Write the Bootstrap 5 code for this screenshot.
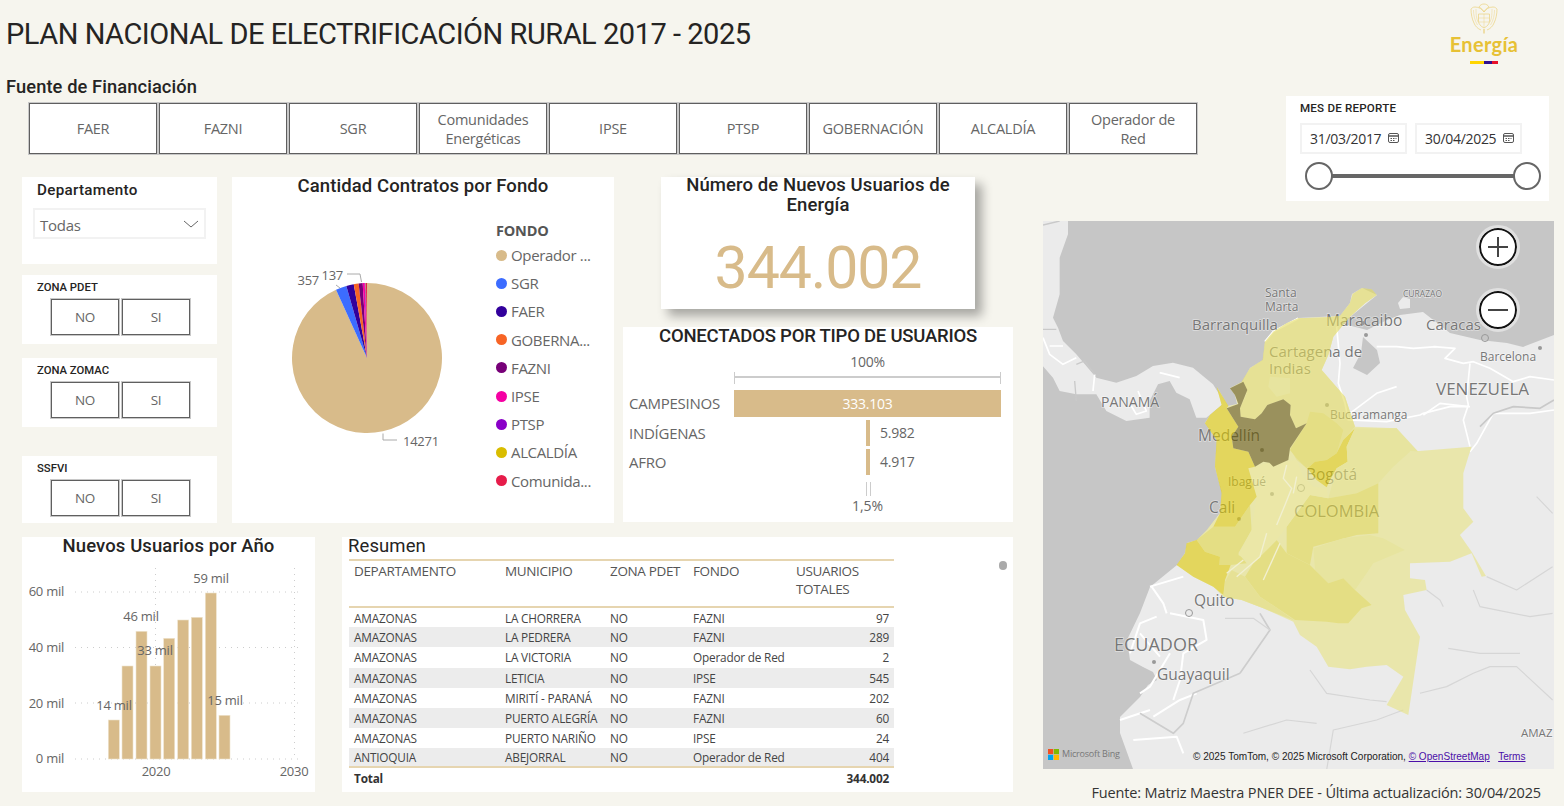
<!DOCTYPE html>
<html lang="es">

<head>
    <meta charset="UTF-8">
    <meta name="viewport" content="width=device-width, initial-scale=1.0">
    <title>Plan Nacional de Electrificación Rural</title>
    <link href="https://cdn.jsdelivr.net/npm/bootstrap@5.3.0/dist/css/bootstrap.min.css" rel="stylesheet">
    <script src="https://cdn.jsdelivr.net/npm/bootstrap@5.3.0/dist/js/bootstrap.bundle.min.js"></script>
    <style>
        body {
            background-color: #f6f5ee;
            width: 1564px;
            height: 806px;
            overflow: hidden;
            font-family: "Open Sans", sans-serif;
            color: #666;
        }

        .din {
            font-family: Roboto, sans-serif;
            color: #252423;
        }

        .panel {
            background-color: #fff;
            display: flow-root;
        }

        .top-bar {
            height: 70px;
        }

        .page-title {
            font-size: 29px;
            font-weight: 400;
            letter-spacing: -.47px;
            margin: 16px 0 0 6px;
            line-height: 36px;
        }

        .logo-box {
            width: 70px;
            margin: 3px 45px 0 0;
        }

        .logo-word {
            font-family: Lato, sans-serif;
            font-weight: 700;
            font-size: 20px;
            line-height: 22px;
            color: #e7c135;
            text-align: center;
            margin-top: -1px;
            letter-spacing: .3px;
        }

        .logo-flag {
            width: 28px;
            height: 3px;
            margin: 6px auto 0;
            background: linear-gradient(90deg, #ffd500 50%, #30108e 50%, #30108e 78%, #e8102a 78%);
        }

        .left-side {
            width: 1043px;
        }

        .source-title {
            font-size: 18.3px;
            font-weight: 500;
            line-height: 22px;
            margin: 6px 0 5px 6px;
            letter-spacing: .1px;
        }

        .fund-row {
            margin-left: 29px;
            margin-bottom: 23px;
            gap: 2px;
        }

        .fund-btn,
        .yn-btn {
            background-color: #fff;
            border: 1px solid #5f5f5f;
            outline: 1px solid #c8c8c8;
            outline-offset: 0;
            border-radius: 0;
            color: #666;
            padding: 0 6px;
            font-size: 14.5px;
            line-height: 19px;
            letter-spacing: -.25px;
        }

        .fund-btn {
            flex: 0 0 128px;
            height: 51px;
        }

        .yn-btn {
            width: 68px;
            height: 36px;
            font-size: 13.5px;
        }

        .col-filters {
            width: 195px;
            margin-left: 22px;
        }

        .dep-card {
            height: 87px;
            padding: 5px 11px 0;
            margin-bottom: 11px;
        }

        .dep-title {
            font-size: 15.2px;
            font-weight: 500;
            letter-spacing: .3px;
            line-height: 16px;
            margin: 0 0 10px 4px;
        }

        .dep-select {
            height: 31px;
            border: 2px solid #f2f2f2;
            padding: 0 5px 0 5px;
            font-size: 15px;
            letter-spacing: -.25px;
        }

        .dep-select span {
            margin-top: 3px;
        }

        .zone-card {
            padding: 6px 0 0 15px;
        }

        .zone-label {
            font-size: 11.300px;
            font-weight: 500;
            line-height: 14px;
            margin-bottom: 4px;
        }

        .zone-btns {
            margin-left: 14px;
            gap: 3px;
        }

        .h-69 {
            height: 69px;
        }

        .h-67 {
            height: 67px;
        }

        .mb-14 {
            margin-bottom: 14px;
        }

        .mb-29 {
            margin-bottom: 29px;
        }

        .pie-card {
            width: 382px;
            height: 346px;
            margin: 0 9px 0 15px;
            position: relative;
        }

        .card-heading {
            font-size: 18.5px;
            font-weight: 500;
            line-height: 20px;
            text-align: center;
            letter-spacing: .1px;
            margin: -1px 0 1px;
        }

        .kpi-head {
            margin-top: -2px;
        }

        .users-head {
            letter-spacing: -.23px;
            margin-bottom: 7px;
        }

        .pie-svg {
            position: absolute;
            left: 0;
            top: 0;
        }

        .pie-svg text,
        .chart-svg text {
            font-family: "Open Sans", sans-serif;
            font-size: 13px;
            letter-spacing: -.25px;
            fill: #666;
        }

        .legend-box {
            position: absolute;
            left: 264px;
            top: 44px;
        }

        .legend-title {
            font-weight: 700;
            font-size: 14.5px;
            line-height: 20px;
            color: #555;
            letter-spacing: -.2px;
        }

        .legend-item {
            height: 28.2px;
            font-size: 15px;
            letter-spacing: -.35px;
            line-height: 28px;
            white-space: nowrap;
        }

        .legend-dot {
            width: 11px;
            height: 11px;
            border-radius: 50%;
            margin-right: 4px;
        }

        .col-right {
            width: 390px;
        }

        .kpi-card {
            width: 314px;
            height: 132px;
            margin: 0 0 18px 38px;
            box-shadow: 7px 7px 10px rgba(0, 0, 0, .32);
        }

        .kpi-value {
            font-size: 59px;
            line-height: 60px;
            font-weight: 400;
            color: #d8bb8a;
            text-align: center;
            margin-top: 23px;
            letter-spacing: -1.1px;
        }

        .users-card {
            height: 195px;
        }

        .users-grid {
            display: grid;
            grid-template-columns: 111px 267px;
            font-size: 15px;
            letter-spacing: -.25px;
        }

        .users-label {
            padding-left: 6px;
            line-height: 26px;
            height: 29px;
        }

        .axis-label {
            text-align: center;
            font-size: 14px;
            line-height: 18px;
        }

        .axis-top {
            height: 12px;
            border: 2px solid #ccc;
            border-width: 0 1px;
            position: relative;
            margin: 1px 0 6px;
        }

        .axis-top::after {
            content: "";
            position: absolute;
            left: 0;
            right: 0;
            top: 4px;
            border-top: 2px solid #ccc;
        }

        .bar-main {
            height: 27px;
            background-color: #d8bb8a;
            color: #fff;
            text-align: center;
            line-height: 27px;
            font-size: 14px;
            margin-bottom: 3px;
        }

        .bar-cell {
            height: 29px;
            padding-left: 132px;
            font-size: 14px;
            line-height: 26px;
        }

        .bar-thin {
            width: 4px;
            height: 26px;
            background-color: #d8bb8a;
            margin-right: 10px;
        }

        .axis-small {
            width: 5px;
            height: 14px;
            border: 1px solid #ccc;
            border-width: 0 1px;
            margin: 4px 0 1px 132px;
        }

        .axis-foot {
            width: 267px;
            margin-left: 111px;
        }

        .row-two {
            margin: 14px 0 0 22px;
        }

        .year-card {
            width: 293px;
            height: 255px;
            margin-right: 27px;
        }

        .table-card {
            width: 671px;
            height: 255px;
            position: relative;
        }

        .table-card .card-heading {
            text-align: left;
            padding-left: 6px;
            font-weight: 400;
        }

        .table-box {
            margin: 3px 0 0 7px;
            width: 545px;
        }

        .res-table {
            table-layout: fixed;
            margin: 0;
            font-size: 11.8px;
            color: #444;
            letter-spacing: -.2px;
            border-top: 2px solid #e6d5b0;
        }

        .res-table th,
        .res-table td {
            border: 0;
            padding: 0 5px;
            box-shadow: none;
            background: transparent;
            color: #444;
            vertical-align: middle;
            white-space: nowrap;
        }

        .res-table thead th {
            font-weight: 400;
            font-size: 13.5px;
            line-height: 18px;
            letter-spacing: -.35px;
            height: 47px;
            padding-top: 1px;
            vertical-align: top;
            white-space: normal;
            border-bottom: 2px solid #e6d5b0;
            color: #555;
        }

        .res-table tbody td {
            height: 20.2px;
            line-height: 14px;
        }

        .res-table tbody tr:last-child td {
            height: 19px;
        }

        .res-table tbody tr:nth-child(even) td {
            background-color: #ececec;
        }

        .res-table tfoot td {
            border-top: 2px solid #e6d5b0;
            height: 22px;
            font-weight: 700;
            color: #333;
        }

        .scroll-dot {
            position: absolute;
            right: 6px;
            top: 24px;
            width: 8px;
            height: 9px;
            border-radius: 4px;
            background-color: #aaa;
        }

        .right-side {
            width: 521px;
            padding-top: 26px;
        }

        .date-card {
            width: 263px;
            height: 105px;
            margin: 0 0 20px 243px;
            padding: 5px 0 0 14px;
        }

        .date-label {
            font-size: 11.6px;
            font-weight: 500;
            letter-spacing: .2px;
            line-height: 14px;
            margin-bottom: 8px;
        }

        .date-box {
            width: 107px;
            height: 31px;
            border: 2px solid #f2f2f2;
            padding: 0 6px 0 8px;
            color: #333;
            font-size: 14px;
            letter-spacing: -.3px;
        }

        .range-line {
            position: relative;
            height: 28px;
            margin: 8px 0 0 5px;
            width: 236px;
        }

        .range-line::before {
            content: "";
            position: absolute;
            left: 10px;
            right: 10px;
            top: 12px;
            height: 4px;
            background-color: #666;
        }

        .range-knob {
            position: absolute;
            top: 0;
            width: 28px;
            height: 28px;
            border: 2px solid #666;
            border-radius: 50%;
            background-color: #fff;
        }

        .map-box {
            width: 511px;
            height: 548px;
            position: relative;
            overflow: hidden;
        }

        .map-svg {
            display: block;
        }

        .map-svg text {
            font-family: "Open Sans", sans-serif;
            fill: #777;
            paint-order: stroke;
            stroke: rgba(255, 255, 255, .45);
            stroke-width: 1.5px;
        }

        .zoom-btn {
            position: absolute;
            left: 434px;
            padding: 0;
            background-color: #fff;
            border: 2px solid #111;
            border-radius: 50%;
            outline: 3px solid #e0e0e0;
            display: flex;
            align-items: center;
            justify-content: center;
            width: 38px;
            height: 38px;
            margin: 2px;
        }

        .zoom-plus {
            top: 5px;
        }

        .zoom-minus {
            top: 68px;
        }

        .map-credit {
            position: absolute;
            left: 150px;
            top: 530px;
            font-family: "Liberation Sans", sans-serif;
            font-size: 10.050px;
            line-height: 12px;
            color: #222;
            white-space: nowrap;
        }

        .map-credit a {
            color: #4b0fa8;
        }

        .bing-mark {
            position: absolute;
            left: 5px;
            top: 527px;
            gap: 3px;
            font-size: 9px;
            line-height: 12px;
            color: #777;
            letter-spacing: -.2px;
        }

        .foot-note {
            width: 498px;
            text-align: right;
            margin-top: 14px;
            font-size: 14.5px;
            line-height: 20px;
            color: #333;
            letter-spacing: -.15px;
        }
    </style>
</head>

<body>
    <div class="top-bar d-flex justify-content-between">
        <h1 class="page-title din">PLAN NACIONAL DE ELECTRIFICACIÓN RURAL 2017 - 2025</h1>
        <div class="logo-box">
            <svg class="d-block mx-auto" width="28" height="31" viewBox="0 0 28 31" fill="none" stroke="#ecd58a" stroke-width=".8">
                <path d="M8.500 11h11v7c0 3-2 5-5.500 7-3.500-2-5.500-4-5.500-7z" />
                <path d="M8.500 15h11M8.500 19h11M14 11v14" stroke-width=".5" />
                <path d="M14 9C12 6 9 4 5 4 3 4 2 5 1 6c0 5 1 10 3 14 1 3 4 6 7 7" />
                <path d="M14 9c2-3 5-5 9-5 2 0 3 1 4 2 0 5-1 10-3 14-1 3-4 6-7 7" />
                <path d="M9 4c1-2 3-3 5-3s4 1 5 3c-2 1-4 3-5 5-1-2-3-4-5-5z" />
                <path d="M3.500 7c0 5 1 10 4 15M6 6c0 4 0 9 2 13M24.500 7c0 5-1 10-4 15M22 6c0 4 0 9-2 13" stroke-width=".5" />
                <path d="M14 26v4.500" stroke-width="1.400" />
            </svg>
            <div class="logo-word">Energía</div>
            <div class="logo-flag"></div>
        </div>
    </div>

    <div class="d-flex">
        <div class="left-side">
            <div class="source-title din">Fuente de Financiación</div>
            <div class="fund-row d-flex">
                <button type="button" class="btn fund-btn">FAER</button>
                <button type="button" class="btn fund-btn">FAZNI</button>
                <button type="button" class="btn fund-btn">SGR</button>
                <button type="button" class="btn fund-btn">Comunidades Energéticas</button>
                <button type="button" class="btn fund-btn">IPSE</button>
                <button type="button" class="btn fund-btn">PTSP</button>
                <button type="button" class="btn fund-btn">GOBERNACIÓN</button>
                <button type="button" class="btn fund-btn">ALCALDÍA</button>
                <button type="button" class="btn fund-btn">Operador de<br>Red</button>
            </div>

            <div class="d-flex">
                <div class="col-filters">
                    <div class="panel dep-card">
                        <div class="dep-title din">Departamento</div>
                        <div class="dep-select d-flex align-items-center justify-content-between">
                            <span>Todas</span>
                            <svg width="16" height="8" viewBox="0 0 16 8" fill="none" stroke="#666" stroke-width="1">
                                <path d="M1 1l7 6 7-6" />
                            </svg>
                        </div>
                    </div>
                    <div class="panel zone-card h-69 mb-14">
                        <div class="zone-label din">ZONA PDET</div>
                        <div class="zone-btns d-flex">
                            <button type="button" class="btn yn-btn">NO</button>
                            <button type="button" class="btn yn-btn">SI</button>
                        </div>
                    </div>
                    <div class="panel zone-card h-69 mb-29">
                        <div class="zone-label din">ZONA ZOMAC</div>
                        <div class="zone-btns d-flex">
                            <button type="button" class="btn yn-btn">NO</button>
                            <button type="button" class="btn yn-btn">SI</button>
                        </div>
                    </div>
                    <div class="panel zone-card h-67">
                        <div class="zone-label din">SSFVI</div>
                        <div class="zone-btns d-flex">
                            <button type="button" class="btn yn-btn">NO</button>
                            <button type="button" class="btn yn-btn">SI</button>
                        </div>
                    </div>
                </div>

                <div class="panel pie-card">
                    <div class="card-heading din">Cantidad Contratos por Fondo</div>
                    <svg class="pie-svg" id="pieChart" width="264" height="346" viewBox="232 177 264 346">
                        <path d="M383 433.500v6.500h14M336 285l4 3M347 274h13l1.500 8" fill="none" stroke="#aaa" stroke-width="1" />
                        <text x="403" y="445.500">14271</text>
                        <text x="297.500" y="285">357</text>
                        <text x="321.500" y="280">137</text>
                    </svg>
                    <div class="legend-box">
                        <div class="legend-title">FONDO</div>
                        <div class="legend-item d-flex align-items-center"><span class="legend-dot" style="background:#d8bb8a"></span>Operador ...</div>
                        <div class="legend-item d-flex align-items-center"><span class="legend-dot" style="background:#3c6cff"></span>SGR</div>
                        <div class="legend-item d-flex align-items-center"><span class="legend-dot" style="background:#32009c"></span>FAER</div>
                        <div class="legend-item d-flex align-items-center"><span class="legend-dot" style="background:#f76425"></span>GOBERNA...</div>
                        <div class="legend-item d-flex align-items-center"><span class="legend-dot" style="background:#770078"></span>FAZNI</div>
                        <div class="legend-item d-flex align-items-center"><span class="legend-dot" style="background:#f500a3"></span>IPSE</div>
                        <div class="legend-item d-flex align-items-center"><span class="legend-dot" style="background:#8a00c8"></span>PTSP</div>
                        <div class="legend-item d-flex align-items-center"><span class="legend-dot" style="background:#d9bd00"></span>ALCALDÍA</div>
                        <div class="legend-item d-flex align-items-center"><span class="legend-dot" style="background:#e61c4a"></span>Comunida...</div>
                    </div>
                </div>

                <div class="col-right">
                    <div class="panel kpi-card">
                        <div class="card-heading kpi-head din">Número de Nuevos Usuarios de Energía</div>
                        <div class="kpi-value din">344.002</div>
                    </div>
                    <div class="panel users-card">
                        <div class="card-heading users-head din">CONECTADOS POR TIPO DE USUARIOS</div>
                        <div class="users-grid">
                            <div></div>
                            <div>
                                <div class="axis-label">100%</div>
                                <div class="axis-top"></div>
                            </div>
                            <div class="users-label">CAMPESINOS</div>
                            <div class="bar-main">333.103</div>
                            <div class="users-label">INDÍGENAS</div>
                            <div class="bar-cell d-flex"><span class="bar-thin"></span>5.982</div>
                            <div class="users-label">AFRO</div>
                            <div class="bar-cell d-flex"><span class="bar-thin"></span>4.917</div>
                        </div>
                        <div class="axis-foot">
                            <div class="axis-small"></div>
                            <div class="axis-label">1,5%</div>
                        </div>
                    </div>
                </div>
            </div>

            <div class="row-two d-flex">
                <div class="panel year-card">
                    <div class="card-heading din">Nuevos Usuarios por Año</div>
                    <svg class="chart-svg d-block" width="293" height="235" viewBox="22 557 293 235">
                        <g stroke="#ccc" stroke-width="1" stroke-dasharray="1 5">
                            <path d="M75 592h225M75 647.500h225M75 703h225M75 759h225M155.500 568v191M294.500 568v191" />
                        </g>
                        <g fill="#d8bb8a" stroke="#efe3cd" stroke-width=".6">
                            <rect x="108.300" y="720" width="11" height="39" />
                            <rect x="122" y="666" width="11" height="93" />
                            <rect x="136" y="631.300" width="11" height="127.700" />
                            <rect x="150" y="666" width="11" height="93" />
                            <rect x="163.700" y="638.300" width="11" height="120.700" />
                            <rect x="177.700" y="620" width="11" height="139" />
                            <rect x="191.300" y="617.300" width="11" height="141.700" />
                            <rect x="205.300" y="593" width="11" height="166" />
                            <rect x="219" y="715.300" width="11" height="43.700" />
                        </g>
                        <g text-anchor="end">
                            <text x="64" y="596">60 mil</text>
                            <text x="64" y="652">40 mil</text>
                            <text x="64" y="708">20 mil</text>
                            <text x="64" y="763">0 mil</text>
                        </g>
                        <g text-anchor="middle">
                            <text x="156" y="776">2020</text>
                            <text x="294" y="776">2030</text>
                            <text x="114" y="710">14 mil</text>
                            <text x="141" y="621">46 mil</text>
                            <text x="155" y="655">33 mil</text>
                            <text x="211" y="583">59 mil</text>
                            <text x="225" y="705">15 mil</text>
                        </g>
                    </svg>
                </div>

                <div class="panel table-card">
                    <div class="card-heading din">Resumen</div>
                    <div class="table-box">
                        <table class="table res-table">
                            <colgroup>
                                <col width="151">
                                <col width="105">
                                <col width="83">
                                <col width="103">
                                <col width="103">
                            </colgroup>
                            <thead>
                                <tr>
                                    <th>DEPARTAMENTO</th>
                                    <th>MUNICIPIO</th>
                                    <th>ZONA PDET</th>
                                    <th>FONDO</th>
                                    <th>USUARIOS TOTALES</th>
                                </tr>
                            </thead>
                            <tbody>
                                <tr><td>AMAZONAS</td><td>LA CHORRERA</td><td>NO</td><td>FAZNI</td><td class="text-end">97</td></tr>
                                <tr><td>AMAZONAS</td><td>LA PEDRERA</td><td>NO</td><td>FAZNI</td><td class="text-end">289</td></tr>
                                <tr><td>AMAZONAS</td><td>LA VICTORIA</td><td>NO</td><td>Operador de Red</td><td class="text-end">2</td></tr>
                                <tr><td>AMAZONAS</td><td>LETICIA</td><td>NO</td><td>IPSE</td><td class="text-end">545</td></tr>
                                <tr><td>AMAZONAS</td><td>MIRITÍ - PARANÁ</td><td>NO</td><td>FAZNI</td><td class="text-end">202</td></tr>
                                <tr><td>AMAZONAS</td><td>PUERTO ALEGRÍA</td><td>NO</td><td>FAZNI</td><td class="text-end">60</td></tr>
                                <tr><td>AMAZONAS</td><td>PUERTO NARIÑO</td><td>NO</td><td>IPSE</td><td class="text-end">24</td></tr>
                                <tr><td>ANTIOQUIA</td><td>ABEJORRAL</td><td>NO</td><td>Operador de Red</td><td class="text-end">404</td></tr>
                            </tbody>
                            <tfoot>
                                <tr><td colspan="4">Total</td><td class="text-end">344.002</td></tr>
                            </tfoot>
                        </table>
                    </div>
                    <div class="scroll-dot"></div>
                </div>
            </div>
        </div>

        <div class="right-side">
            <div class="panel date-card">
                <div class="date-label din">MES DE REPORTE</div>
                <div class="d-flex gap-2">
                    <div class="date-box d-flex align-items-center justify-content-between">
                        <span>31/03/2017</span>
                        <svg width="11" height="11" viewBox="0 0 11 11" fill="none" stroke="#555" stroke-width="1"><rect x=".5" y=".5" width="10" height="9" rx="1.500" /><path d="M1 3h9" stroke-width="1.500" /><path d="M2.500 5.500h1.500M5 5.500h1.500M7.500 5.500h1M2.500 7.500h1.500M5 7.500h1.500" /></svg>
                    </div>
                    <div class="date-box d-flex align-items-center justify-content-between">
                        <span>30/04/2025</span>
                        <svg width="11" height="11" viewBox="0 0 11 11" fill="none" stroke="#555" stroke-width="1"><rect x=".5" y=".5" width="10" height="9" rx="1.500" /><path d="M1 3h9" stroke-width="1.500" /><path d="M2.500 5.500h1.500M5 5.500h1.500M7.500 5.500h1M2.500 7.500h1.500M5 7.500h1.500" /></svg>
                    </div>
                </div>
                <div class="range-line">
                    <span class="range-knob start-0"></span>
                    <span class="range-knob end-0"></span>
                </div>
            </div>

            <div class="map-box">
                <svg class="map-svg" width="511" height="548" viewBox="1043 221 511 548">
                    <rect x="1043" y="221" width="511" height="548" fill="#c6c6c6" />

                    <!-- land -->
                    <polygon fill="#ebebeb" points="1554,335 1523,347 1507,343 1480,340 1450,333 1423,312 1400,315 1387,320 1367,330 1340,323 1350,317 1377,295 1362,288 1352,294 1350,303 1340,316 1298,318 1287,323 1273,332 1265,342 1263,360 1250,368 1242,382 1230,388 1235,395 1237,404 1228,406 1217,387 1222,405 1210,415 1205,423 1217,440 1215,467 1222,493 1220,513 1207,530 1197,540 1187,543 1185,553 1177,565 1150,587 1140,613 1127,640 1130,660 1143,667 1153,672 1157,680 1148,685 1140,697 1120,717 1120,733 1133,769 1554,769" />
                    <polygon fill="#ebebeb" points="1398,303 1403,297 1410,299 1410,308 1400,309" />
                    <polygon fill="#c6c6c6" points="1363,337 1377,350 1380,363 1367,375 1353,368 1361,353" />
                    <polygon fill="#ebebeb" transform="translate(1043 221) scale(.3333)" points="-5,-5 75,-5 75,40 50,110 50,220 30,290 45,320 60,360 100,400 160,470 220,485 280,465 330,435 390,425 450,440 510,490 545,545 490,590 460,590 440,535 400,515 380,480 345,490 320,540 320,590 250,600 190,570 160,520 100,520 50,510 30,470 -5,430" />

                    <!-- roads and borders, panama side -->
                    <g transform="translate(1043 221) scale(.3333)" fill="none" stroke-linejoin="round">
                        <path stroke="#fff" stroke-width="5" d="M0 350l20 50 40 30 40-20M20 375h40M155 460l-5 50M285 510l25 60-30 10-15-25M350 455l60 15" />
                        <path stroke="#c9c9c9" stroke-width="4" d="M100 430l25-10 30 40M95 480l5 60M0 12l50-12M0 325h40" />
                    </g>
                    <!-- roads, venezuela side -->
                    <g transform="translate(1180 280) scale(.3333)" fill="none" stroke="#fff" stroke-width="5" stroke-linejoin="round">
                        <path d="M470 140l10 110-5 60 20 60 10 50 115 5 100-20 10-5 80-20 60 0M590 200h60l50 5 70-5M510 400l80-60 60-20" />
                        <path d="M355 115l-75 40-25 30" stroke-width="6" />
                    </g>
                    <g transform="translate(1380 280) scale(.3333)" fill="none" stroke-linejoin="round">
                        <path stroke="#fff" stroke-width="5" d="M160 200l65 5-30 30 55 15 30-5 50 20 70 40 50-15 72 10M270 250l-10 100 5 25-15 45 20 80M130 405l50-35 85 10M340 400h110l72-10M340 400l-50 90-20 25" />
                        <path stroke="#c9c9c9" stroke-width="5" d="M300 440l40-40 60-20 80 5 42-25" />
                    </g>
                    <!-- roads, ecuador and the south -->
                    <g transform="translate(1040 400) scale(.3333)" fill="none" stroke-linejoin="round">
                        <path stroke="#fff" stroke-width="6" d="M335 560l35 50 10 30M390 640l100 20 10 60-70 40-10 80-20 60M350 650l-50 20-30 90M340 950l80-50 50-20M240 960l90-30M280 1020l130-10 20 50M330 560l100-30M390 760l-60 100-30 20M300 700l60 70" />
                        <path stroke="#cdcdcd" stroke-width="5" d="M300 940l100 60 30-30 30-90 140-60M660 640l30 50-90 130" />
                        <path stroke="#d6d6d6" stroke-width="3.500" d="M555 655h85l50 35M860 1110l20-120 130-30 80-30M610 1000l130-40 90 10M810 810l50 70 130 20 50 5M1140 880l80-20 80-40 50-20h80l108 100M1225 745l95 15h120M1300 570l20 50 150 30 68-10M1340 530l90 40 108-70M1490 290l48 50M1160 570l40 30 10 20" />
                    </g>

                    <!-- map labels -->
                    <text font-size="12"><tspan x="1265" y="297">Santa</tspan><tspan x="1265" y="311">Marta</tspan></text>
                    <text x="1192" y="330" font-size="15">Barranquilla</text>
                    <text x="1326" y="326" font-size="15.500">Maracaibo</text>
                    <text x="1403" y="297" font-size="8.500">CURAZAO</text>
                    <text x="1426" y="330" font-size="15">Caracas</text>
                    <text x="1480" y="361" font-size="12">Barcelona</text>
                    <text x="1436" y="395" font-size="17">VENEZUELA</text>
                    <text x="1101" y="407" font-size="14">PANAMÁ</text>
                    <text font-size="15"><tspan x="1269" y="357">Cartagena de</tspan><tspan x="1269" y="374">Indias</tspan></text>
                    <text x="1330" y="419" font-size="12">Bucaramanga</text>
                    <text x="1198" y="441" font-size="15.500">Medellín</text>
                    <text x="1228" y="486" font-size="12">Ibagué</text>
                    <text x="1306" y="480" font-size="15.500">Bogotá</text>
                    <text x="1209" y="513" font-size="15.500">Cali</text>
                    <text x="1294" y="517" font-size="16.500">COLOMBIA</text>
                    <text x="1194" y="606" font-size="15.500">Quito</text>
                    <text x="1114" y="651" font-size="18">ECUADOR</text>
                    <text x="1157" y="680" font-size="15.500">Guayaquil</text>
                    <text x="1521" y="737" font-size="11.500">AMAZ</text>
                    <g fill="#999">
                        <circle cx="1363" cy="323" r="2" />
                        <circle cx="1366" cy="335" r="2" />
                        <circle cx="1327" cy="405" r="2" />
                        <circle cx="1262" cy="450" r="2" />
                        <circle cx="1272" cy="494" r="2" />
                        <circle cx="1239" cy="519" r="2" />
                        <circle cx="1154" cy="662" r="2" />
                        <circle cx="1540" cy="348" r="2" />
                    </g>
                    <g fill="none" stroke="#999">
                        <circle cx="1485" cy="338" r="3.500" />
                        <circle cx="1301" cy="488" r="3.500" />
                        <circle cx="1189" cy="613" r="3.500" />
                    </g>

                    <!-- colombia, semi transparent so the labels show through -->
                    <g transform="translate(1180 280) scale(.3333)" opacity=".6">
                        <polygon fill="#e8e482" points="590,45 575,28 545,25 518,42 510,70 480,108 440,112 355,115 320,130 280,155 255,185 248,240 210,265 185,305 150,325 165,345 172,372 145,378 110,320 125,375 90,405 75,430 110,480 105,560 125,640 120,700 80,750 50,780 20,790 15,820 -10,855 40,890 100,920 130,950 185,960 250,985 340,1025 360,1065 410,1100 445,1160 510,1168 560,1160 620,1155 670,1190 620,1275 685,1305 720,1070 675,990 670,945 740,930 735,900 690,895 690,850 810,845 875,820 905,890 918,888 875,815 840,765 880,725 850,685 850,580 865,530 875,500 690,515 650,445 525,440 495,350 425,270 445,225 460,170 510,110 555,70" />
                        <polygon fill="#e4dc5d" points="590,45 575,28 545,25 518,42 510,70 480,108 440,112 355,115 320,130 280,155 255,185 248,240 210,265 185,305 200,340 180,385 182,410 225,418 245,400 262,375 310,358 332,375 330,405 348,445 380,430 330,505 350,540 380,565 405,545 470,520 490,480 525,440 495,350 425,270 445,225 460,170 510,110 555,70" />
                        <polygon fill="#e6e16e" points="270,290 330,295 330,340 290,350 265,320" />
                        <polygon fill="#e1d741" points="390,395 430,400 470,430 490,450 470,520 440,540 405,545 380,565 350,535 330,510 380,430" />
                        <polygon fill="#dec900" points="525,445 500,500 503,545 470,565 450,600 440,622 410,600 382,565 405,545 440,540 470,520 490,480" />
                        <polygon fill="#e6e16e" points="525,445 650,445 715,515 690,515 640,560 595,610 530,640 445,655 470,565 503,545 500,500" />
                        <polygon fill="#e1d741" points="595,610 595,760 530,765 400,800 390,855 320,820 320,740 390,645 445,655 530,640" />
                        <polygon fill="#e6e16e" points="400,805 490,775 570,765 610,775 675,810 580,850 560,880 525,930 490,895 445,910 405,870" />
                        <polygon fill="#e1d741" points="320,820 390,855 405,870 445,910 490,895 525,930 575,975 545,985 505,1030 475,1030 440,1025 345,1020 300,990 240,950 195,890 220,850 290,780" />
                        <polygon fill="#e4dc5d" points="130,950 135,905 155,870 195,890 240,950 300,990 345,1022 250,985 185,960" />
                        <polygon fill="#e1d741" points="50,780 100,740 165,740 210,675 215,750 175,820 200,850 152,855 118,855 120,830 75,815" />
                        <polygon fill="#ebe67b" points="205,565 260,550 350,540 370,590 400,620 440,625 445,655 390,645 320,740 290,780 220,850 175,825 215,750 230,650" />
                        <polygon fill="#dec900" points="-10,855 15,820 20,790 50,780 75,815 120,830 118,855 152,855 135,900 130,945 100,920 40,890" />
                        <polygon fill="#dec900" points="110,320 145,378 140,385 175,440 155,470 160,505 205,515 225,560 205,565 230,650 210,675 165,740 100,740 120,700 125,640 105,560 110,480 75,430 90,405 125,375" />
                        <polygon fill="#665700" points="190,305 202,330 180,385 182,410 225,418 245,400 262,375 310,358 332,375 330,405 348,445 380,430 330,505 325,540 280,560 268,548 250,545 225,560 205,515 160,505 155,470 175,440 140,385 175,372 165,345 150,325" />
                        <path fill="none" stroke="#f6f3c0" stroke-width="4" d="M320 555l-10 40 25 30-20 50-25 60M350 590l-10 50M250 900l50-110M170 890l70-60 20-70M140 880l50-40" />
                    </g>
                </svg>

                <button type="button" class="zoom-btn zoom-plus" aria-label="Acercar"><svg width="22" height="22" viewBox="0 0 22 22" stroke="#444" stroke-width="2"><path d="M11 1v20M1 11h20" /></svg></button>
                <button type="button" class="zoom-btn zoom-minus" aria-label="Alejar"><svg width="22" height="22" viewBox="0 0 22 22" stroke="#444" stroke-width="2"><path d="M1 11h20" /></svg></button>

                <div class="bing-mark d-flex align-items-center">
                    <svg width="11" height="11" viewBox="0 0 11 11"><rect width="5.200" height="5.200" fill="#f25022" /><rect x="5.800" width="5.200" height="5.200" fill="#7fba00" /><rect y="5.800" width="5.200" height="5.200" fill="#00a4ef" /><rect x="5.800" y="5.800" width="5.200" height="5.200" fill="#ffb900" /></svg>
                    <span>Microsoft Bing</span>
                </div>
                <div class="map-credit">© 2025 TomTom, © 2025 Microsoft Corporation, <a href="#">© OpenStreetMap</a> &nbsp;&nbsp;<a href="#">Terms</a></div>
            </div>

            <div class="foot-note">Fuente: Matriz Maestra PNER DEE - Última actualización: 30/04/2025</div>
        </div>
    </div>

    <script>
        // pie slices as [start, end] degrees clockwise from the top
        const slices = [
            [0, 335.6, "#d8bb8a"],
            [335.6, 344, "#3c6cff"],
            [344, 349.8, "#32009c"],
            [349.8, 353.6, "#f76425"],
            [353.6, 356.7, "#770078"],
            [356.7, 358.3, "#f500a3"],
            [358.3, 358.9, "#8a00c8"],
            [358.9, 359.2, "#d9bd00"],
            [359.2, 360, "#e61c4a"]
        ];
        const cx = 367, cy = 358, r = 75;
        const pie = document.getElementById("pieChart");

        function point(deg) {
            const rad = (deg - 90) * Math.PI / 180;
            return (cx + r * Math.cos(rad)).toFixed(2) + " " + (cy + r * Math.sin(rad)).toFixed(2);
        }

        slices.forEach(s => {
            const path = document.createElementNS("http://www.w3.org/2000/svg", "path");
            const large = s[1] - s[0] > 180 ? 1 : 0;
            path.setAttribute("d", `M${cx} ${cy}L${point(s[0])}A${r} ${r} 0 ${large} 1 ${point(s[1])}Z`);
            path.setAttribute("fill", s[2]);
            pie.appendChild(path);
        });
    </script>
</body>

</html>
